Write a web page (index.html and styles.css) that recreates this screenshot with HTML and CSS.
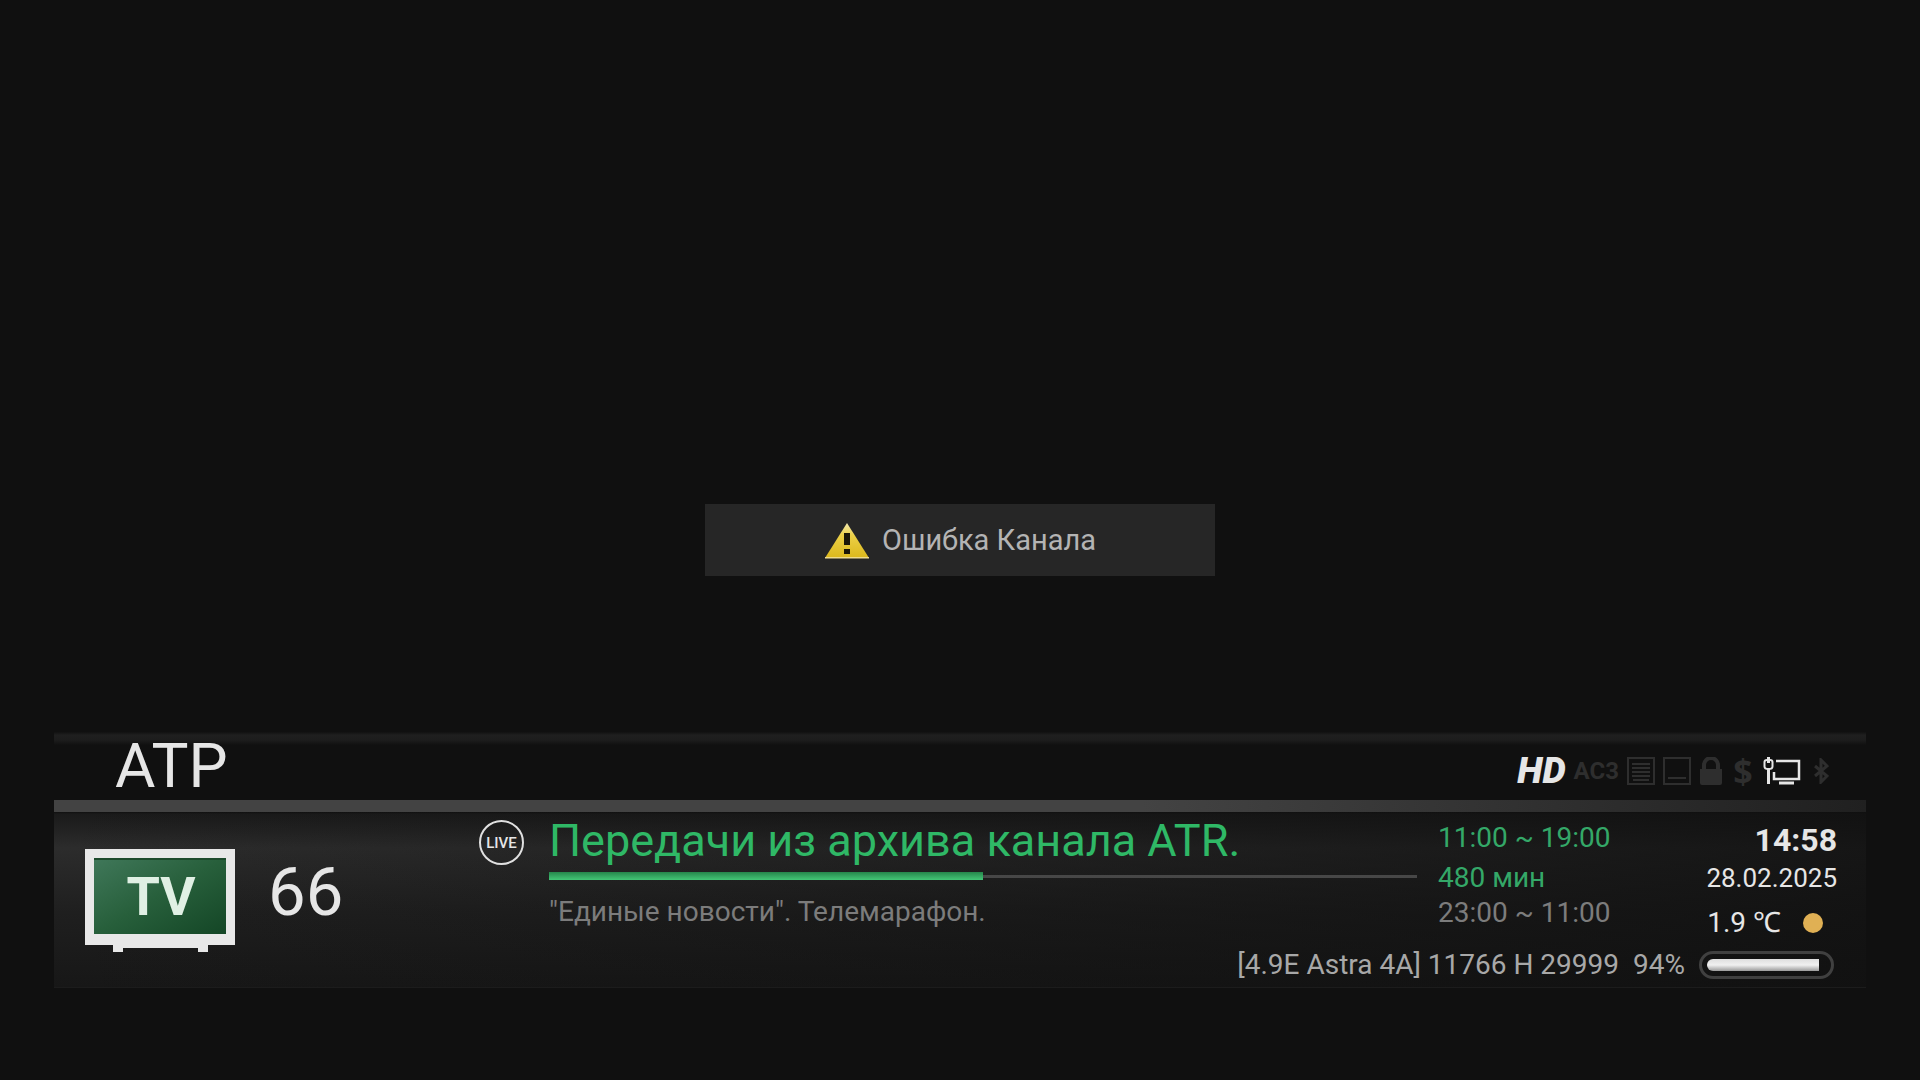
FILE: index.html
```html
<!DOCTYPE html>
<html lang="ru">
  <head>
    <meta charset="utf-8">
    <title>АТР</title>
    <link rel="stylesheet" href="styles.css">
  </head>
  <body>
    <div class="message" role="alert">
      <svg class="warning" viewBox="0 0 46 38" width="46" height="38">
        <defs>
          <linearGradient id="yellow" x1="0" y1="0" x2="0" y2="1">
            <stop offset="0" stop-color="#f3e9b0" />
            <stop offset="0.35" stop-color="#ecd047" />
            <stop offset="1" stop-color="#dcb81c" />
          </linearGradient>
        </defs>
        <path d="M23 2L45 37H1z" fill="url(#yellow)" />
        <path d="M1 36h44v1.500H1z" fill="#f0dc8c" />
        <path d="M20 12h6v12h-6zM20 28h6v5h-6z" fill="#1a1608" />
      </svg>
      <span>Ошибка Канала</span>
    </div>

    <main class="infobar">
      <header class="header">
        <h1 class="channel">АТР</h1>
        <div class="flags">
          <span class="hd">HD</span>
          <span class="ac3">AC3</span>
          <!-- teletext -->
          <svg class="off" viewBox="0 0 28 28" width="28" height="28">
            <path d="M1 1h26v26H1z" fill="none" stroke="currentColor" stroke-width="2" />
            <path d="M5 7h18M5 11h18M5 15h18M5 19h18M6 23h16" stroke="currentColor" stroke-width="2" />
          </svg>
          <!-- subtitles -->
          <svg class="off" viewBox="0 0 28 28" width="28" height="28">
            <path d="M1 1h26v26H1z" fill="none" stroke="currentColor" stroke-width="2" />
            <path d="M5 21h18" stroke="currentColor" stroke-width="2" />
          </svg>
          <!-- lock -->
          <svg class="off" viewBox="0 0 24 28" width="24" height="28">
            <path d="M5 13V8a7 7 0 0 1 14 0v5" fill="none" stroke="currentColor" stroke-width="4" />
            <path d="M1 12h22v14q0 2-2 2H3q-2 0-2-2z" fill="currentColor" />
          </svg>
          <span class="pay">$</span>
          <!-- network -->
          <svg class="net" viewBox="0 0 38 28" width="38" height="28">
            <path d="M4 3Q1.500 3 1.500 5v4.500Q1.500 12 5.500 12T9.500 9.500V5Q9.500 3 7 3" fill="none" stroke="currentColor" stroke-width="2" />
            <path d="M5.500 0v6M5.500 12v15" stroke="currentColor" stroke-width="3" />
            <path d="M13 4h23v18H11v-7" fill="none" stroke="currentColor" stroke-width="2.500" />
            <path d="M16 26h15" stroke="currentColor" stroke-width="3" />
          </svg>
          <!-- bluetooth -->
          <svg class="off bluetooth" viewBox="0 0 16 26" width="16" height="26">
            <path d="M2 8l12 10-6 6V2l6 6L2 18" fill="none" stroke="currentColor" stroke-width="3" />
          </svg>
        </div>
      </header>

      <section class="details">
        <div class="station">
          <svg class="logo" viewBox="0 0 150 103" width="150" height="103">
            <defs>
              <linearGradient id="green" x1="0" y1="0" x2="1" y2="1">
                <stop offset="0" stop-color="#40785a" />
                <stop offset="0.5" stop-color="#275f3b" />
                <stop offset="1" stop-color="#144626" />
              </linearGradient>
            </defs>
            <path d="M0 0h150v96h-27v7h-10v-4H38v4H28v-7H0z" fill="#e8e8e8" />
            <path d="M9 9h132v76H9z" fill="url(#green)" />
            <path d="M9 10h132" stroke="#1d4a2c" stroke-width="2" />
            <text class="logo-text" x="76" y="66" text-anchor="middle">TV</text>
          </svg>
          <span class="number">66</span>
        </div>

        <div class="live">LIVE</div>

        <div class="programme">
          <h2 class="title">Передачи из архива канала ATR.</h2>
          <div class="progress"><div class="elapsed"></div></div>
          <p class="next">"Единые новости". Телемарафон.</p>
        </div>

        <div class="times">
          <p class="now">11:00 ~ 19:00</p>
          <p class="now">480 мин</p>
          <p class="later">23:00 ~ 11:00</p>
        </div>

        <div class="status">
          <p class="clock">14:58</p>
          <p class="date">28.02.2025</p>
          <p class="weather">1.9 ℃ <i class="sun"></i></p>
        </div>
      </section>

      <footer class="tuner">
        <span>[4.9E Astra 4A] 11766 H 29999</span>
        <span>94%</span>
        <div class="signal"><div class="level"></div></div>
      </footer>
    </main>
  </body>
</html>
```
FILE: styles.css
```css
* {
  box-sizing: border-box;
}
body {
  display: flex;
  flex-direction: column;
  justify-content: flex-end;
  min-height: 100vh;
  margin: 0;
  padding: 0 54px 92px;
  background: #101010;
  color: #e6e6e6;
  font-family: Roboto, sans-serif;
  font-size: 28px;
}
h1,
h2,
p {
  margin: 0;
  font-weight: 400;
}

/* error message over the video */
.message {
  position: absolute;
  top: 50%;
  left: 50%;
  transform: translate(-50%, -50%);
  display: flex;
  align-items: center;
  justify-content: center;
  gap: 12px;
  width: 510px;
  height: 72px;
  background: #262626;
  color: #b4b4b4;
  font-size: 29px;
}

/* header */
.header {
  display: flex;
  align-items: center;
  justify-content: space-between;
  height: 80px;
  padding: 0 37px 0 61px;
  background: linear-gradient(#111, #1f1f1f 3px, #1d1d1d 8px, #101010 13px);
  border-bottom: 12px solid;
  border-image: linear-gradient(90deg, #434343 60%, #202020) 1;
  border-width: 0 0 12px;
}
.channel {
  font-size: 62px;
  line-height: 68px;
}
.flags {
  display: flex;
  align-items: center;
  gap: 8px;
  padding-top: 10px;
}
.off,
.ac3,
.pay {
  color: #2e2e2e;
}
.hd {
  font-size: 37px;
  font-style: italic;
  font-weight: 900;
  line-height: 36px;
}
.ac3 {
  font-size: 24px;
  font-weight: 700;
}
.pay {
  width: 24px;
  font-family: "Open Sans", sans-serif;
  font-size: 34px;
  font-weight: 700;
  line-height: 34px;
  text-align: center;
}
.bluetooth {
  margin-left: 4px;
}

/* programme details */
.details {
  display: flex;
  align-items: flex-start;
  height: 130px;
}
.infobar {
  border-bottom: 1px solid #1c1c1c;
  background:
    linear-gradient(90deg, rgba(16, 16, 16, 0) 0%, rgba(16, 16, 16, 0.8) 100%),
    linear-gradient(#101010 80px, #1a1a1a 82px, #2c2c2c 116px, #1f1f1f 180px, #171717 100%);
}
.station {
  display: flex;
  align-items: flex-start;
  gap: 33px;
  width: 425px;
  padding: 37px 0 0 31px;
}
.logo-text {
  fill: #e0f0e4;
  font-size: 54px;
  font-weight: 700;
}
.number {
  font-size: 67px;
  line-height: 86px;
}
.live {
  display: flex;
  align-items: center;
  justify-content: center;
  width: 45px;
  height: 45px;
  margin: 8px 25px 0 0;
  border: 2px solid #e0e0e0;
  border-radius: 50%;
  font-size: 15px;
  font-weight: 500;
}
.programme {
  flex: 1;
}
.title {
  margin-bottom: 2px;
  color: #2fb866;
  font-size: 45px;
  line-height: 58px;
  white-space: nowrap;
}
.progress {
  display: flex;
  align-items: center;
  height: 8px;
  margin-bottom: 16px;
  background: linear-gradient(#474747, #474747) center / 100% 3px no-repeat;
}
.elapsed {
  width: 50%;
  height: 8px;
  background: linear-gradient(#26864b, #43c676);
}
.next {
  color: #7c7c7c;
  line-height: 32px;
}
.times {
  width: 233px;
  margin-left: 21px;
  padding-top: 6px;
  line-height: 40px;
}
.now {
  color: #34a868;
}
.later {
  color: #7c7c7c;
  line-height: 29px;
}
.status {
  width: 195px;
  padding: 8px 29px 0 0;
  line-height: 36px;
  text-align: right;
}
.clock {
  font-size: 32px;
  font-weight: 700;
  line-height: 40px;
}
.date {
  font-size: 26px;
}
.weather {
  display: flex;
  align-items: center;
  justify-content: flex-end;
  gap: 22px;
  padding: 9px 14px 0 0;
}
.sun {
  width: 20px;
  height: 20px;
  border-radius: 50%;
  background: #e0b054;
}

/* tuner */
.tuner {
  display: flex;
  align-items: center;
  justify-content: flex-end;
  gap: 14px;
  padding: 3px 32px 2px 0;
  color: #a8a8a8;
  line-height: 40px;
}
.signal {
  width: 135px;
  height: 28px;
  padding: 5px;
  border: 3px solid #404040;
  border-radius: 14px;
}
.level {
  width: 94%;
  height: 12px;
  border-radius: 6px 0 0 6px;
  background: linear-gradient(#dedede, #f0f0f0 50%, #9a9a9a);
}
```
